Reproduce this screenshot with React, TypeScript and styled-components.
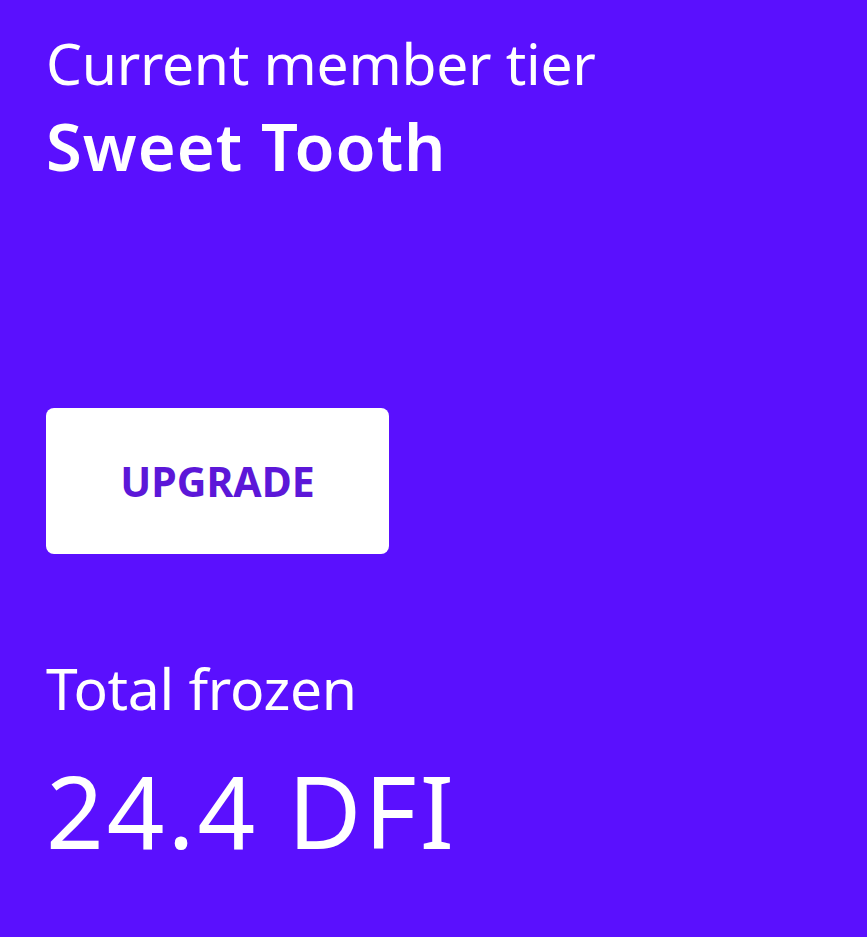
import React from 'react';
import styled, { createGlobalStyle } from 'styled-components';

const GlobalStyle = createGlobalStyle`
  html, body {
    margin: 0;
    padding: 0;
    background: #5a10fe;
  }
  body {
    font-family: "Noto Sans", Roboto, sans-serif;
    color: #ffffff;
  }
`;

const Page = styled.div`
  min-height: 937px;
  box-sizing: border-box;
  padding: 28px 46px 0;
  display: flex;
  flex-direction: column;
  align-items: flex-start;
`;

const Label = styled.div`
  font-size: 57px;
  font-weight: 400;
  line-height: 70px;
  letter-spacing: -0.3px;
`;

const TierName = styled.div`
  font-size: 65px;
  font-weight: 600;
  line-height: 80px;
  letter-spacing: 1px;
  margin-top: 8px;
`;

const UpgradeButton = styled.button`
  margin-top: 222px;
  width: 343px;
  height: 146px;
  border: none;
  border-radius: 8px;
  background: #ffffff;
  color: #5c17d8;
  font-family: inherit;
  font-size: 41px;
  font-weight: 700;
  cursor: pointer;
`;

const Section = styled.div<{ $gap: number }>`
  margin-top: ${p => p.$gap}px;
`;

const Amount = styled.div`
  font-size: 101px;
  font-weight: 400;
  line-height: 120px;
  letter-spacing: 3px;
  margin-top: 27px;
`;

export default function App() {
    return (
        <Page>
            <GlobalStyle />
            <Label>Current member tier</Label>
            <TierName>Sweet Tooth</TierName>
            <UpgradeButton>UPGRADE</UpgradeButton>
            <Section $gap={99}>
                <Label>Total frozen</Label>
                <Amount>24.4 DFI</Amount>
            </Section>
        </Page>
    );
}
